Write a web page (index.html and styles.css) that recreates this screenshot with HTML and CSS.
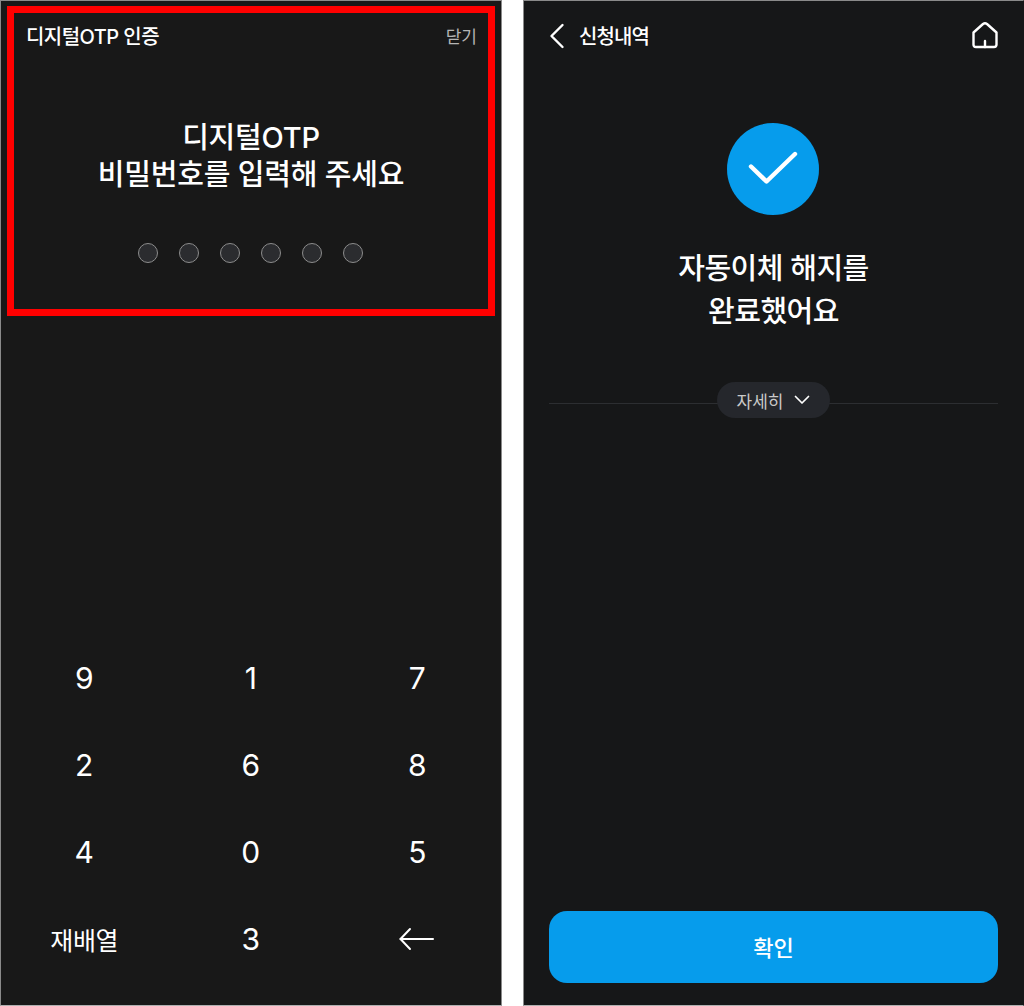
FILE: index.html
```html
<!DOCTYPE html>
<html lang="ko">
<head>
  <meta charset="UTF-8">
  <title>디지털OTP 인증</title>
  <link rel="stylesheet" href="styles.css">
</head>
<body>
  <div class="screen otp">
    <div class="highlight"></div>
    <div class="otp-header">
      <span class="otp-title">디지털OTP 인증</span>
      <span class="otp-close">닫기</span>
    </div>
    <h1 class="otp-heading">디지털OTP<br>비밀번호를 입력해 주세요</h1>
    <div class="dots">
      <span></span><span></span><span></span><span></span><span></span><span></span>
    </div>
    <div class="keypad">
      <div class="key">9</div>
      <div class="key">1</div>
      <div class="key">7</div>
      <div class="key">2</div>
      <div class="key">6</div>
      <div class="key">8</div>
      <div class="key">4</div>
      <div class="key">0</div>
      <div class="key">5</div>
      <div class="key key-text">재배열</div>
      <div class="key">3</div>
      <div class="key">
        <svg width="36" height="24" viewBox="0 0 36 24" fill="none" stroke="#fff" stroke-width="2" stroke-linecap="round" stroke-linejoin="round">
          <path d="M1.5 12H34"/>
          <path d="M11 2L1.5 12L11 22"/>
        </svg>
      </div>
    </div>
  </div>

  <div class="screen result">
    <div class="result-header">
      <svg class="back" width="16" height="26" viewBox="0 0 16 26" fill="none" stroke="#fff" stroke-width="2.4" stroke-linecap="round" stroke-linejoin="round">
        <path d="M13.5 2L2.5 13L13.5 24"/>
      </svg>
      <span class="result-title">신청내역</span>
      <svg class="home" width="28" height="28" viewBox="0 0 28 28" fill="none" stroke="#fff" stroke-width="2.4" stroke-linecap="round" stroke-linejoin="round">
        <path d="M2.5 11.5L12 3Q14 1.5 16 3L25.5 11.5V23.5Q25.5 26 23 26H5Q2.5 26 2.5 23.5Z"/>
        <path d="M14 20V26"/>
      </svg>
    </div>
    <div class="check">
      <svg width="50" height="40" viewBox="0 0 50 40" fill="none" stroke="#fff" stroke-width="4.4" stroke-linecap="round" stroke-linejoin="round">
        <path d="M3 17.5L18.5 32.5L47 5"/>
      </svg>
    </div>
    <h2 class="result-heading">자동이체 해지를<br>완료했어요</h2>
    <div class="detail-row">
      <div class="detail-btn">
        자세히
        <svg width="16" height="10" viewBox="0 0 16 10" fill="none" stroke="#fff" stroke-width="1.7" stroke-linecap="round" stroke-linejoin="round">
          <path d="M1.5 1.5L8 8L14.5 1.5"/>
        </svg>
      </div>
    </div>
    <div class="confirm">확인</div>
  </div>
</body>
</html>
```

FILE: styles.css
```css
* {
  margin: 0;
  padding: 0;
  box-sizing: border-box;
}

body {
  width: 1024px;
  height: 1006px;
  display: flex;
  justify-content: space-between;
  background-color: #fff;
  font-family: "Inter", "Noto Sans CJK KR", sans-serif;
  color: #fff;
  overflow: hidden;
}

.screen {
  position: relative;
  height: 1006px;
  display: flex;
  flex-direction: column;
  background-color: #181818;
  border: 1px solid #8a8a8a;
  border-bottom-color: #b0b0b0;
}

.otp {
  width: 502px;
}

.result {
  width: 501px;
  background-color: #161718;
  border-right-color: #161718;
}

/* 왼쪽 화면 */
.highlight {
  position: absolute;
  left: 6px;
  top: 5px;
  width: 488px;
  height: 310px;
  border: 7px solid #f00;
}

.otp-header {
  display: flex;
  justify-content: space-between;
  align-items: center;
  padding: 18px 24px 0 25px;
  height: 50px;
}

.otp-title {
  font-size: 20px;
  font-weight: 500;
  letter-spacing: -0.55px;
}

.otp-close {
  font-size: 17px;
  color: #b5b5b5;
}

.otp-heading {
  margin-top: 68px;
  text-align: center;
  font-size: 29px;
  line-height: 37px;
  font-weight: 500;
  letter-spacing: -0.2px;
}

.dots {
  display: flex;
  justify-content: center;
  gap: 21px;
  margin-top: 50px;
  padding-right: 2px;
}

.dots span {
  width: 20px;
  height: 20px;
  border: 1px solid #8c8c8c;
  border-radius: 50%;
  background-color: #2b2c2f;
}

.keypad {
  margin-top: 371px;
  display: grid;
  grid-template-columns: repeat(3, 166.5px);
  grid-auto-rows: 87px;
}

.key {
  display: flex;
  align-items: center;
  justify-content: center;
  font-size: 30px;
  font-weight: 400;
}

.key-text {
  font-size: 25px;
  letter-spacing: -0.4px;
}

/* 오른쪽 화면 */
.result-header {
  display: flex;
  align-items: center;
  height: 70px;
  padding: 0 24px 0 25px;
}

.result-title {
  margin: -2px 0 0 14px;
  font-size: 20px;
  font-weight: 500;
  letter-spacing: -0.9px;
}

.home {
  margin: -2px 0 0 auto;
}

.check {
  align-self: center;
  display: flex;
  align-items: center;
  justify-content: center;
  width: 92px;
  height: 92px;
  margin: 52px 1px 0 0;
  border-radius: 50%;
  background-color: #069cec;
}

.result-heading {
  margin-top: 32px;
  text-align: center;
  font-size: 29px;
  line-height: 43px;
  font-weight: 500;
  letter-spacing: -0.5px;
}

.detail-row {
  display: flex;
  justify-content: center;
  margin: 49px 25px 0;
  height: 36px;
  background: linear-gradient(#2c2e31, #2c2e31) 0 21px / 100% 1px no-repeat;
}

.detail-btn {
  display: flex;
  align-items: center;
  justify-content: center;
  gap: 11px;
  width: 113px;
  height: 36px;
  border-radius: 18px;
  background-color: #25272c;
  color: #c9c9c9;
  font-size: 17px;
}

.confirm {
  margin: auto 25px 22px;
  height: 72px;
  padding-bottom: 2px;
  display: flex;
  align-items: center;
  justify-content: center;
  border-radius: 18px;
  background-color: #069cec;
  font-size: 22px;
  font-weight: 500;
}
```
